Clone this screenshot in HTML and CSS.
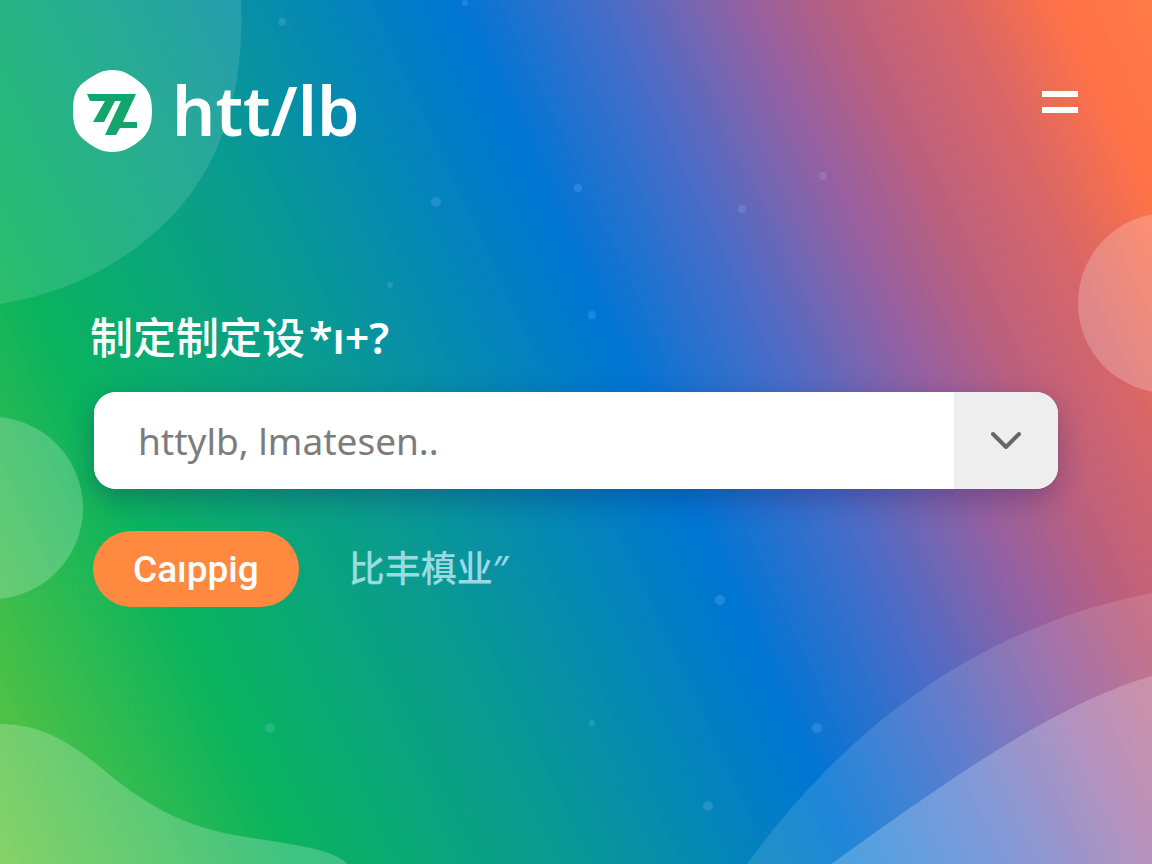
FILE: index.html
```
<!DOCTYPE html>
<html lang="zh-CN">
    <head>
        <meta charset="UTF-8">
        <meta name="viewport" content="width=device-width, initial-scale=1.0">
        <title>htt/lb</title>
        <link rel="stylesheet" href="styles.css">
    </head>
    <body>
        <!-- Background shapes -->
        <svg class="shapes" viewBox="0 0 1152 864" preserveAspectRatio="none" aria-hidden="true">
            <g fill="#fff">
                <path class="soft" d="M0 0H241C245 90 222 165 170 218C125 264 70 292 0 304Z"/>
                <circle class="medium" cx="-8" cy="508" r="91"/>
                <circle class="medium" cx="1168" cy="303" r="90"/>
                <path class="medium" d="M0 724C45 724 75 746 110 775C150 808 190 828 240 836C290 844 335 849 347 864H0Z"/>
                <path class="soft" d="M747 864C850 722 985 625 1152 593V864Z"/>
                <path class="medium" d="M831 864C935 790 1050 705 1152 676V864Z"/>
            </g>
            <g class="dots" fill="#9fd4ff">
                <circle cx="436" cy="202" r="5"/>
                <circle cx="578" cy="188" r="4"/>
                <circle cx="742" cy="209" r="4"/>
                <circle cx="823" cy="176" r="4"/>
                <circle cx="592" cy="315" r="4"/>
                <circle cx="390" cy="285" r="3"/>
                <circle cx="282" cy="22" r="4"/>
                <circle cx="465" cy="3" r="3"/>
                <circle cx="720" cy="600" r="5"/>
                <circle cx="817" cy="728" r="5"/>
                <circle cx="592" cy="723" r="3"/>
                <circle cx="270" cy="728" r="5"/>
                <circle cx="708" cy="806" r="5"/>
            </g>
        </svg>

        <header class="header">
            <a class="logo" href="#">
                <svg class="logo-mark" viewBox="0 0 80 84" aria-hidden="true">
                    <path fill="#fff" d="M40 2C51 2 57 6 65 12C76 20 80 27 80 43C80 58 76 67 66 74C58 80 51 84 40 84C30 84 23 80 15 74C4 66 1 58 1 43C1 27 4 19 15 12C24 6 30 2 40 2Z"/>
                    <path fill="#12a56c" d="M15 26H64L51 54H65V60H48L44 67H33L49 33H43L32 54H21L33 33H18Z"/>
                </svg>
                <span>htt/lb</span>
            </a>
            <button class="menu" type="button" aria-label="Menu">
                <span></span>
                <span></span>
            </button>
        </header>

        <main class="content">
            <label class="question" for="query">制定制定设<span class="marks">*ı+?</span></label>
            <div class="search">
                <input type="text" id="query" placeholder="httylb, lmatesen..">
                <button class="toggle" type="button" aria-label="Options">
                    <svg viewBox="0 0 32 20" aria-hidden="true">
                        <path d="M3 3L16 16L29 3" fill="none" stroke="#666" stroke-width="4" stroke-linecap="round" stroke-linejoin="round"/>
                    </svg>
                </button>
            </div>
            <div class="actions">
                <button class="primary" type="button">Caıppig</button>
                <a class="secondary" href="#">比丰槙业″</a>
            </div>
        </main>
    </body>
</html>
```
FILE: styles.css
```
* {
    box-sizing: border-box;
}
body {
    font-family: 'Noto Sans', 'Noto Sans CJK SC', sans-serif;
    position: relative;
    min-height: 100vh;
    margin: 0;
    padding: 68px 72px;
    overflow-x: hidden;
    background: linear-gradient(65deg, #6ec83a -2%, #0ab35e 19%, #0a9a92 36%, #0076d4 55%, #4a6cc8 65%, #9660a0 74%, #bc607e 80%, #d86668 87%, #ff7247 94%, #ff7b4a 100%);
    color: #fff;
}
.shapes {
    position: absolute;
    inset: 0;
    width: 100%;
    height: 100%;
    z-index: -1;
}
.soft {
    opacity: 0.12;
}
.medium {
    opacity: 0.22;
}
.dots {
    opacity: 0.18;
}
.header {
    display: flex;
    justify-content: space-between;
    align-items: flex-start;
}
.logo {
    display: flex;
    align-items: center;
    gap: 20px;
    color: #fff;
    font-size: 68px;
    font-weight: 600;
    line-height: 84px;
    text-decoration: none;
}
.logo-mark {
    width: 80px;
    height: 84px;
}
.menu {
    display: flex;
    flex-direction: column;
    gap: 10px;
    margin: 23px 2px 0 0;
    padding: 0;
    border: none;
    background: none;
    cursor: pointer;
}
.menu span {
    width: 36px;
    height: 6px;
    background: #fff;
}
.content {
    margin-top: 158px;
    padding: 0 22px 0 18px;
}
.question {
    display: block;
    margin-bottom: 26px;
    font-size: 43px;
    font-weight: 500;
    line-height: 56px;
}
.question .marks {
    margin-left: 4px;
    font-weight: 600;
}
.search {
    display: flex;
    height: 97px;
    margin-left: 4px;
    border-radius: 22px;
    background: #fff;
    box-shadow: 0 10px 28px rgba(20, 20, 90, 0.3);
    overflow: hidden;
}
.search input {
    flex: 1;
    min-width: 0;
    padding: 0 44px;
    border: none;
    background: #fff;
    color: #555;
    font-family: inherit;
    font-size: 37px;
}
.search input::placeholder {
    color: #7c7c7c;
}
.toggle {
    display: flex;
    justify-content: center;
    align-items: center;
    width: 104px;
    padding: 0;
    border: none;
    background: #eee;
    cursor: pointer;
}
.toggle svg {
    width: 32px;
    height: 20px;
}
.actions {
    display: flex;
    align-items: center;
    gap: 50px;
    margin: 42px 0 0 3px;
}
.primary {
    height: 76px;
    padding: 0 40px;
    border: none;
    border-radius: 38px;
    background: #ff8a3f;
    color: #fff;
    font-family: Roboto, sans-serif;
    font-size: 37px;
    font-weight: 500;
    cursor: pointer;
}
.secondary {
    color: rgba(200, 240, 255, 0.75);
    font-size: 36px;
    font-weight: 500;
    line-height: 48px;
    text-decoration: none;
}
```
